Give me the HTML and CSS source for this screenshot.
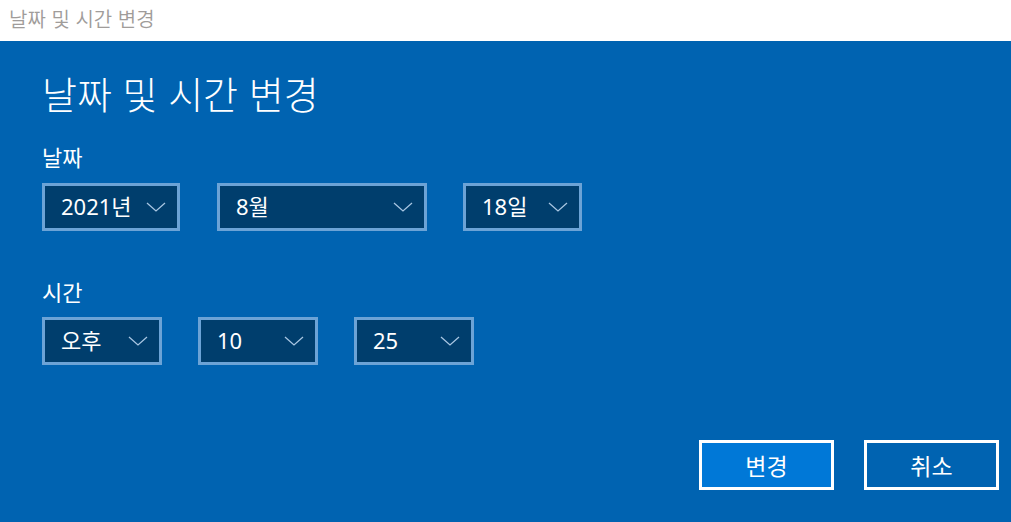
FILE: index.html
```html
<!DOCTYPE html>
<html lang="ko">
<head>
<meta charset="utf-8">
<link rel="stylesheet" href="styles.css">
</head>
<body>
<div class="titlebar">날짜 및 시간 변경</div>
<main class="panel">
  <h1 class="heading">날짜 및 시간 변경</h1>
  <section class="group">
    <div class="label">날짜</div>
    <div class="row">
      <div class="select w-year"><span>2021년</span><svg class="chev" viewBox="0 0 20 10"><path d="M1 1 L10 9 L19 1" /></svg></div>
      <div class="select w-month"><span>8월</span><svg class="chev" viewBox="0 0 20 10"><path d="M1 1 L10 9 L19 1" /></svg></div>
      <div class="select w-day"><span>18일</span><svg class="chev" viewBox="0 0 20 10"><path d="M1 1 L10 9 L19 1" /></svg></div>
    </div>
  </section>
  <section class="group group-time">
    <div class="label">시간</div>
    <div class="row">
      <div class="select w-small"><span>오후</span><svg class="chev" viewBox="0 0 20 10"><path d="M1 1 L10 9 L19 1" /></svg></div>
      <div class="select w-small"><span>10</span><svg class="chev" viewBox="0 0 20 10"><path d="M1 1 L10 9 L19 1" /></svg></div>
      <div class="select w-small"><span>25</span><svg class="chev" viewBox="0 0 20 10"><path d="M1 1 L10 9 L19 1" /></svg></div>
    </div>
  </section>
  <div class="actions">
    <button class="btn primary">변경</button>
    <button class="btn">취소</button>
  </div>
</main>
</body>
</html>
```

FILE: styles.css
```css
* { box-sizing: border-box; }
html, body { margin: 0; padding: 0; }
body {
  width: 1011px;
  height: 522px;
  overflow: hidden;
  font-family: "Noto Sans", "Noto Sans CJK KR", sans-serif;
  background: #0063b1;
}
.titlebar {
  height: 41px;
  background: #ffffff;
  color: #a09c9a;
  font-family: "Noto Sans CJK KR", sans-serif;
  font-weight: 350;
  font-size: 20px;
  line-height: 38px;
  padding-left: 9px;
}
.panel {
  height: 481px;
  background: #0063b1;
  color: #ffffff;
  padding: 0 12px 0 42px;
  display: flex;
  flex-direction: column;
}
.heading {
  margin: 27px 0 0 0;
  font-family: "Noto Sans CJK KR", sans-serif;
  font-weight: 300;
  font-size: 38px;
  line-height: 50px;
  letter-spacing: 0;
}
.group { margin-top: 25px; }
.group-time { margin-top: 47px; }
.label {
  font-family: "Noto Sans CJK KR", sans-serif;
  font-weight: 400;
  font-size: 22px;
  line-height: 27px;
  margin-bottom: 13px;
}
.group-time .label { margin-bottom: 12px; }
.row {
  display: flex;
  gap: 36px;
}
.select {
  height: 48px;
  border: 3px solid #6ca3d6;
  background: #003e6d;
  display: flex;
  align-items: center;
  justify-content: space-between;
  padding: 0 11px 0 16px;
  font-size: 22px;
  color: #ffffff;
}
.select span { line-height: 1; position: relative; top: -1px; }
.w-year { width: 138px; }
.w-month { width: 210px; margin-left: 1px; }
.w-day { width: 119px; }
.w-small { width: 120px; }
.chev {
  width: 20px;
  height: 10px;
  fill: none;
  stroke: #a8c6e2;
  stroke-width: 1.3;
}
.actions {
  margin-top: auto;
  margin-bottom: 32px;
  display: flex;
  justify-content: flex-end;
  gap: 30px;
}
.btn {
  width: 135px;
  height: 50px;
  border: 3px solid #ffffff;
  background: #0063b1;
  color: #ffffff;
  font-family: "Noto Sans CJK KR", sans-serif;
  font-size: 23px;
  padding: 0;
}
.btn.primary { background: #0078d7; }
```
